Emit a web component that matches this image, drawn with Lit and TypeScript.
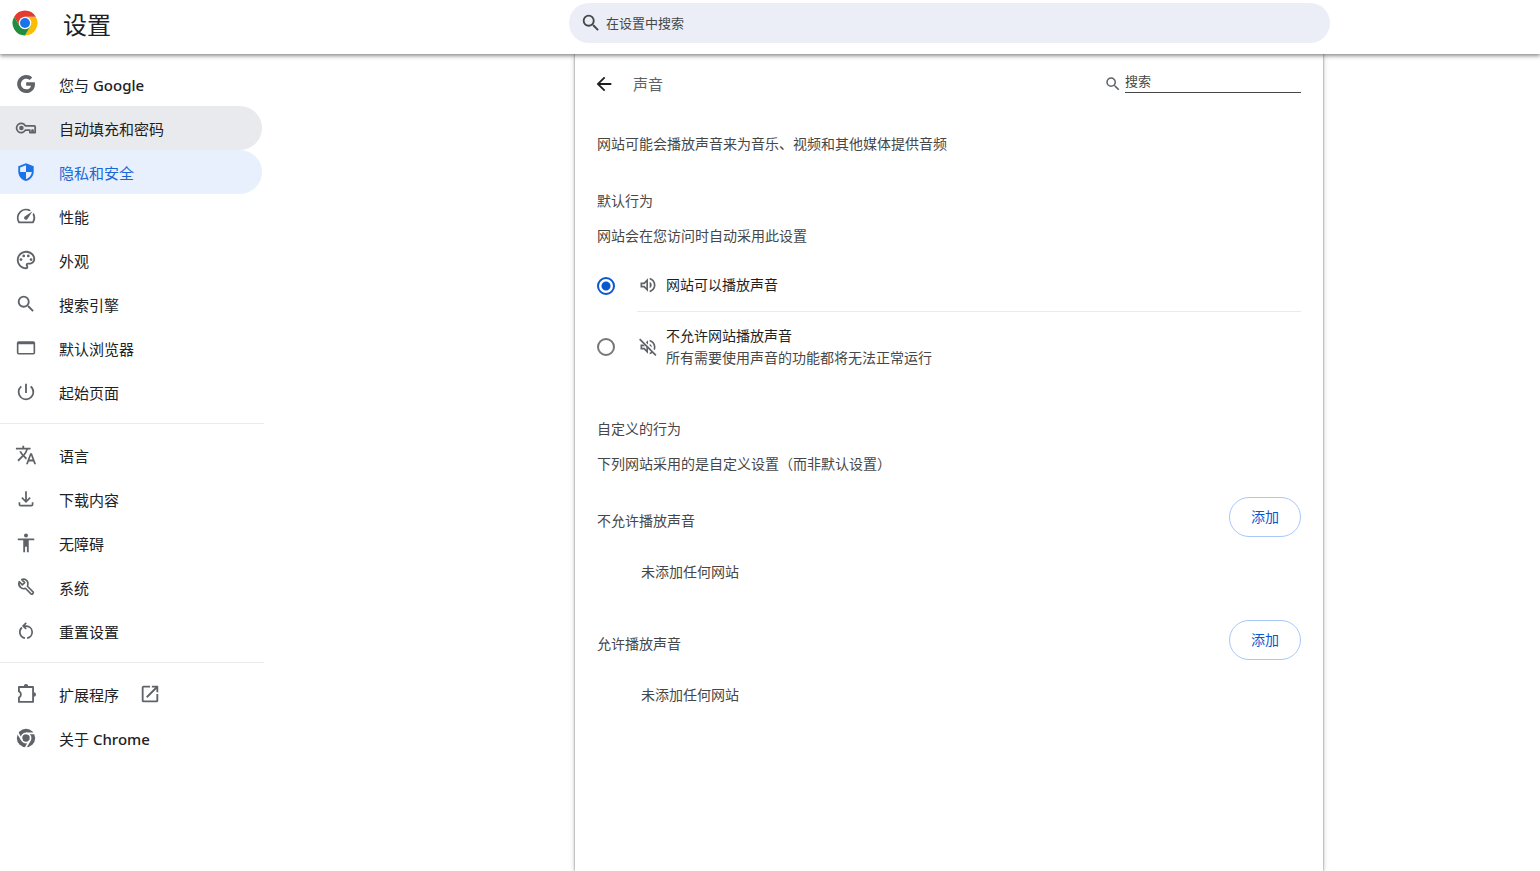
import { LitElement, html, css, svg, nothing } from "lit";
import { customElement, property, state } from "lit/decorators.js";

const ICONS: Record<string, unknown> = {
  search: svg`<path d="M15.5 14h-.79l-.28-.27A6.471 6.471 0 0 0 16 9.5 6.5 6.5 0 1 0 9.5 16c1.61 0 3.09-.59 4.23-1.57l.27.28v.79l5 4.99L20.49 19l-4.99-5zm-6 0C7.01 14 5 11.99 5 9.5S7.01 5 9.5 5 14 7.01 14 9.5 11.99 14 9.5 14z"/>`,
  google: svg`<path d="M12.2 10.2v3.600h5.300c-.5 2.300-2.500 4-5.300 4a5.800 5.800 0 1 1 3.800-10.200l2.800-2.800A9.800 9.800 0 1 0 12.200 21.800c5.600 0 9.600-4 9.600-9.600 0-.7-.1-1.400-.2-2z"/>`,
  key: svg`<path fill="none" stroke="currentColor" stroke-width="1.900" stroke-linejoin="round" d="M11.300 9.600A5.100 5.100 0 1 0 11.300 14.400H16.200V17H18.600V14.400H19.600V17H22V10.600Q22 9.600 21 9.600z"/><circle cx="7" cy="12" r="2.500"/>`,
  shield: svg`<path d="M12 2.500L3.600 5.600v5.800c0 4.900 3.500 9 8.400 10.500 4.900-1.500 8.400-5.600 8.400-10.500V5.600L12 2.500zm0 9.500h6.400c-.4 3.600-2.900 6.600-6.400 7.800V12H5.600V7L12 4.600V12z"/>`,
  speed: svg`<path d="M20.380 8.570l-1.230 1.850a8 8 0 0 1-.22 7.580H5.070A8 8 0 0 1 15.580 6.850l1.850-1.230A10 10 0 0 0 3.350 19a2 2 0 0 0 1.720 1h13.850a2 2 0 0 0 1.740-1 10 10 0 0 0-.27-10.440zM10.590 15.410a2 2 0 0 0 2.830 0l5.660-8.490-8.490 5.660a2 2 0 0 0 0 2.830z"/>`,
  palette: svg`<path d="M12 22C6.490 22 2 17.510 2 12S6.490 2 12 2s10 4.040 10 9c0 3.310-2.690 6-6 6h-1.770c-.28 0-.5.22-.5.5 0 .12.05.23.13.33.41.47.64 1.060.64 1.670A2.500 2.500 0 0 1 12 22zm0-18c-4.410 0-8 3.590-8 8s3.590 8 8 8c.28 0 .5-.22.5-.5a.54.54 0 0 0-.14-.35c-.41-.46-.63-1.050-.63-1.650a2.500 2.500 0 0 1 2.500-2.500H16c2.210 0 4-1.790 4-4 0-3.860-3.590-7-8-7z"/><circle cx="6.500" cy="11.500" r="1.500"/><circle cx="9.500" cy="7.500" r="1.500"/><circle cx="14.500" cy="7.500" r="1.500"/><circle cx="17.500" cy="11.500" r="1.500"/>`,
  browser: svg`<path fill-rule="evenodd" d="M4 4.500H20A2 2 0 0 1 22 6.500V17.200A2 2 0 0 1 20 19.200H4A2 2 0 0 1 2 17.200V6.500A2 2 0 0 1 4 4.500zM3.800 8V17.400H20.200V8z"/>`,
  power: svg`<path d="M13 3h-2v10h2V3zm4.830 2.170l-1.420 1.420A6.920 6.920 0 0 1 19 12c0 3.870-3.130 7-7 7A6.995 6.995 0 0 1 7.580 6.580L6.170 5.170A8.932 8.932 0 0 0 3 12a9 9 0 0 0 18 0c0-2.740-1.230-5.180-3.170-6.830z"/>`,
  translate: svg`<path d="M12.870 15.070l-2.540-2.510.03-.03A17.520 17.520 0 0 0 14.070 6H17V4h-7V2H8v2H1v1.990h11.170C11.500 7.920 10.440 9.750 9 11.350 8.070 10.320 7.300 9.190 6.690 8h-2c.73 1.630 1.730 3.170 2.980 4.560l-5.090 5.020L4 19l5-5 3.110 3.110.76-2.040zM18.500 10h-2L12 22h2l1.120-3h4.750L21 22h2l-4.500-12zm-2.620 7l1.620-4.330L19.120 17h-3.240z"/>`,
  download: svg`<path fill="none" stroke="currentColor" stroke-width="1.900" d="M12 3.500V14.500M7.500 10.500L12 15 16.500 10.500M4.800 15.500V17.600Q4.800 19.100 6.300 19.100H17.700Q19.200 19.100 19.200 17.600V15.500"/>`,
  accessibility: svg`<path d="M12 1.500a2.200 2.200 0 1 1 0 4.400 2.200 2.200 0 0 1 0-4.400zM21 9h-6v13h-2v-6h-2v6H9V9H3V7h18v2z"/>`,
  wrench: svg`<path fill="none" stroke="currentColor" stroke-width="1.800" stroke-linejoin="round" d="M4.600 6.200L8 9.600 10.600 7.200 7.400 3.900C10.800 2.400 14.800 5.200 14 9.400L13.600 11.200 19.900 17.500C20.600 18.500 18.800 20.500 17.700 19.700L11.300 13.400C7.300 15.200 2.800 10.700 4.600 6.200z"/>`,
  reset: svg`<path fill="none" stroke="currentColor" stroke-width="1.900" d="M13.200 19.700A6.600 6.600 0 0 0 12.500 6.600H9.200M10.800 19.700A6.600 6.600 0 0 1 7.600 8.200M12.200 3.200L8.900 6.500 12.200 9.800"/>`,
  extension: svg`<path fill="none" stroke="currentColor" stroke-width="2" stroke-linejoin="round" d="M4.300 4.400H19.700V20.600H4.300V15.800A3.600 3.600 0 0 0 4.300 9.200z"/><path d="M9.600 3.600a2.400 2.400 0 0 1 4.800 0zM20.500 10.100a2.400 2.400 0 0 1 0 4.800z"/>`,
  chrome: svg`<circle cx="12" cy="12" r="10"/><g fill="none" stroke="#fff" stroke-width="1.900"><circle cx="12" cy="12" r="5"/><path d="M12 7H21.500M7.700 14.500L2.800 6.200M16.300 14.500L11.500 22.800"/></g>`,
  external: svg`<path d="M19 19H5V5h7V3H5a2 2 0 0 0-2 2v14a2 2 0 0 0 2 2h14a2 2 0 0 0 2-2v-7h-2v7zM14 3v2h3.590l-9.830 9.830 1.410 1.410L19 6.410V10h2V3h-7z"/>`,
  back: svg`<path d="M20 11H7.830l5.590-5.590L12 4l-8 8 8 8 1.410-1.410L7.830 13H20v-2z"/>`,
  volume: svg`<path d="M3 9v6h4l5 5V4L7 9H3zm7-.17v6.340L7.830 13H5v-2h2.830L10 8.830zM16.500 12A4.500 4.500 0 0 0 14 7.970v8.050A4.470 4.470 0 0 0 16.500 12zM14 3.230v2.060c2.890.86 5 3.540 5 6.710s-2.110 5.850-5 6.710v2.060c4.010-.91 7-4.490 7-8.770s-2.990-7.860-7-8.770z"/>`,
  muted: svg`<path fill="none" stroke="currentColor" stroke-width="2" d="M2 2.500L21.500 22"/><path d="M6.500 9H3v6h4l5 5v-6.600l-2-2v3.770L7.830 13H5v-2h3.500zM12 4L9.500 6.500 12 9zM14 8v2.200l2.480 2.480A4.500 4.500 0 0 0 14 8zM14 3.230v2.060c2.890.86 5 3.540 5 6.710 0 .82-.15 1.610-.41 2.340l1.530 1.530c.56-1.170.88-2.480.88-3.870 0-4.280-2.990-7.860-7-8.770zM14 15.400v5.370c1.340-.3 2.570-.92 3.610-1.750l-1.430-1.430c-.65.49-1.380.88-2.180 1.110z"/>`,
};

@customElement("settings-icon")
class SettingsIcon extends LitElement {
  @property() name = "";
  static styles = css`
    :host { display: block; flex: none; width: 22px; height: 22px; }
    svg { display: block; width: 100%; height: 100%; fill: currentColor; }
  `;
  render() {
    return html`<svg viewBox="0 0 24 24" aria-hidden="true">${ICONS[this.name]}</svg>`;
  }
}

interface NavItem {
  icon: string;
  label: string;
  latin?: string;
  status?: "hovered" | "selected";
  external?: boolean;
}

const NAV: NavItem[][] = [
  [
    { icon: "google", label: "您与", latin: "Google" },
    { icon: "key", label: "自动填充和密码", status: "hovered" },
    { icon: "shield", label: "隐私和安全", status: "selected" },
    { icon: "speed", label: "性能" },
    { icon: "palette", label: "外观" },
    { icon: "search", label: "搜索引擎" },
    { icon: "browser", label: "默认浏览器" },
    { icon: "power", label: "起始页面" },
  ],
  [
    { icon: "translate", label: "语言" },
    { icon: "download", label: "下载内容" },
    { icon: "accessibility", label: "无障碍" },
    { icon: "wrench", label: "系统" },
    { icon: "reset", label: "重置设置" },
  ],
  [
    { icon: "extension", label: "扩展程序", external: true },
    { icon: "chrome", label: "关于", latin: "Chrome" },
  ],
];

@customElement("settings-menu")
class SettingsMenu extends LitElement {
  static styles = css`
    :host { display: block; padding-top: 8px; font-size: 15px; line-height: 22px; color: #202124; }
    .item {
      display: flex; align-items: center; gap: 22px; height: 44px; box-sizing: border-box;
      margin-right: 2px; padding-left: 15px; border-radius: 0 22px 22px 0;
      color: inherit; text-decoration: none;
    }
    .label { padding-top: 2px; }
    .latin { font-weight: 500; }
    settings-icon { color: #5f6368; }
    .label + settings-icon { margin-left: -2px; }
    .hovered { background: #e8eaed; }
    .selected { background: #e8f0fe; color: #1967d2; }
    .selected settings-icon { color: #1a73e8; }
    .group + .group { margin-top: 9px; padding-top: 9px; border-top: 1px solid #e8eaed; }
  `;
  render() {
    return html`<nav aria-label="设置">
      ${NAV.map(
        (group) => html`<div class="group">
          ${group.map(
            (item) => html`<a class="item ${item.status ?? ""}" href="#${item.icon}" aria-current=${item.status === "selected" ? "page" : nothing}>
              <settings-icon name=${item.icon}></settings-icon>
              <span class="label">${item.label}${item.latin ? html` <span class="latin">${item.latin}</span>` : nothing}</span>
              ${item.external ? html`<settings-icon name="external"></settings-icon>` : nothing}
            </a>`
          )}
        </div>`
      )}
    </nav>`;
  }
}

@customElement("site-list")
class SiteList extends LitElement {
  @property() heading = "";
  static styles = css`
    :host { display: block; }
    .head { display: flex; align-items: center; justify-content: space-between; height: 40px; }
    h3 { margin: 0; padding-top: 8px; font: inherit; }
    button {
      height: 40px; padding: 0 21px; border: 1px solid #a8c7fa; border-radius: 20px;
      background: #fff; color: #0b57d0; font: inherit; cursor: pointer;
    }
    p { margin: 0; padding: 24px 44px 37px; }
  `;
  render() {
    return html`<section>
      <div class="head">
        <h3>${this.heading}</h3>
        <button type="button" aria-label="添加：${this.heading}">添加</button>
      </div>
      <p>未添加任何网站</p>
    </section>`;
  }
}

@customElement("sound-page")
class SoundPage extends LitElement {
  @state() private choice = "allow";
  static styles = css`
    :host { display: block; padding: 8px 22px; font-size: 14px; line-height: 22px; color: #474747; }
    .title { display: flex; align-items: center; height: 44px; }
    .back { display: flex; padding: 0; border: 0; background: none; color: #1f1f1f; margin-left: -4px; cursor: pointer; }
    h1 { flex: 1; margin: 0; font-size: 15px; font-weight: 400; line-height: 22px; color: #5f6368; padding-left: 18px; }
    .find { display: flex; align-items: center; gap: 3px; color: #5f6368; }
    .find settings-icon { width: 18px; height: 18px; }
    .find input {
      width: 176px; height: 22px; box-sizing: border-box; padding: 0 0 2px; border: 0; border-bottom: 1px solid #474747;
      background: none; outline: none; font: inherit; font-size: 13px; color: #474747; margin-bottom: 4px;
    }
    input::placeholder { color: #474747; opacity: 1; }
    .intro { margin: 27px 0 35px; }
    h2 { margin: 0 0 13px; font: inherit; }
    p { margin: 0; }
    .option { display: flex; align-items: center; }
    .option input {
      appearance: none; flex: none; width: 18px; height: 18px; margin: 0 22px 0 0; box-sizing: border-box;
      border: 2px solid #747775; border-radius: 50%; background: #fff;
    }
    .option input:checked { border-color: #0b57d0; background: radial-gradient(circle, #0b57d0 4px, #fff 5px); }
    .body { display: flex; flex: 1; align-items: center; gap: 8px; color: #1f1f1f; }
    .body settings-icon { width: 20px; height: 20px; color: #5f6368; margin-left: 1px; }
    .allow { margin-top: 12px; }
    .allow .body { min-height: 52px; border-bottom: 1px solid #e8eaed; }
    .block { height: 70px; }
    .sub { display: block; color: #474747; }
    .custom { margin-top: 36px; }
    site-list { margin-top: 22px; }
    site-list + site-list { margin-top: 0; }
  `;
  private option(value: string, icon: string, label: string, sub = "") {
    return html`<label class="option ${value}">
      <input type="radio" name="sound" .checked=${this.choice === value} @change=${() => (this.choice = value)} />
      <span class="body">
        <settings-icon name=${icon}></settings-icon>
        <span>${label}${sub ? html`<span class="sub">${sub}</span>` : nothing}</span>
      </span>
    </label>`;
  }
  render() {
    return html`
      <div class="title">
        <button class="back" type="button" aria-label="返回"><settings-icon name="back"></settings-icon></button>
        <h1>声音</h1>
        <label class="find">
          <settings-icon name="search"></settings-icon>
          <input type="search" placeholder="搜索" aria-label="搜索" />
        </label>
      </div>
      <p class="intro">网站可能会播放声音来为音乐、视频和其他媒体提供音频</p>
      <h2>默认行为</h2>
      <p>网站会在您访问时自动采用此设置</p>
      ${this.option("allow", "volume", "网站可以播放声音")}
      ${this.option("block", "muted", "不允许网站播放声音", "所有需要使用声音的功能都将无法正常运行")}
      <div class="custom">
        <h2>自定义的行为</h2>
        <p>下列网站采用的是自定义设置（而非默认设置）</p>
      </div>
      <site-list heading="不允许播放声音"></site-list>
      <site-list heading="允许播放声音"></site-list>
    `;
  }
}

@customElement("app-root")
class AppRoot extends LitElement {
  static styles = css`
    :host {
      display: flex; flex-direction: column; min-height: 100vh; background: #fff;
      font-family: "Noto Sans", "Noto Sans CJK SC", sans-serif;
    }
    header {
      position: relative; z-index: 1; display: grid; align-items: center; height: 54px; background: #fff;
      grid-template-columns: 264px minmax(0, 305fr) minmax(0, 761px) minmax(0, 210fr);
      box-shadow: 0 1px 3px rgba(0, 0, 0, 0.3), 0 3px 4px rgba(0, 0, 0, 0.22);
    }
    .brand { display: flex; align-items: center; gap: 25px; height: 46px; padding-left: 12px; align-self: start; }
    .brand svg { width: 26px; height: 26px; }
    .brand h1 { margin: 0; padding-top: 3px; font-size: 24px; font-weight: 400; line-height: 36px; color: #202124; }
    .search {
      grid-column: 3; align-self: start; display: flex; align-items: center; gap: 4px; height: 40px; margin-top: 3px;
      box-sizing: border-box; padding: 0 16px 0 11px; border-radius: 20px; background: #ebeef7; color: #474747;
    }
    .search input { flex: 1; min-width: 0; padding: 0; border: 0; background: none; outline: none; font: 13px/22px "Noto Sans", "Noto Sans CJK SC", sans-serif; color: #474747; }
    .search input::placeholder { color: #474747; opacity: 1; }
    .page { flex: 1; display: grid; grid-template-columns: 264px minmax(0, 311fr) minmax(0, 748px) minmax(0, 217fr); }
    main { grid-column: 3; box-shadow: 0 0 2px rgba(0, 0, 0, 0.5), 0 0 6px rgba(0, 0, 0, 0.2); background: #fff; clip-path: inset(0 -10px); }
  `;
  render() {
    return html`
      <header>
        <div class="brand">
          <svg viewBox="0 0 48 48" aria-hidden="true">
            <path fill="#fbbc04" d="M24 12.500H43.920A23 23 0 0 1 24 47L34 29.700z"/>
            <path fill="#e33b2e" d="M4.080 12.500A23 23 0 0 1 43.920 12.500H24L14 29.700z"/>
            <path fill="#1e8e3e" d="M4.080 12.500A23 23 0 0 0 24 47L34 29.700H14z"/>
            <circle cx="24" cy="24" r="11.500" fill="#fff"/>
            <circle cx="24" cy="24" r="9.200" fill="#1a73e8"/>
          </svg>
          <h1>设置</h1>
        </div>
        <label class="search">
          <settings-icon name="search"></settings-icon>
          <input type="search" placeholder="在设置中搜索" aria-label="在设置中搜索" />
        </label>
      </header>
      <div class="page">
        <settings-menu></settings-menu>
        <main><sound-page></sound-page></main>
      </div>
    `;
  }
}
